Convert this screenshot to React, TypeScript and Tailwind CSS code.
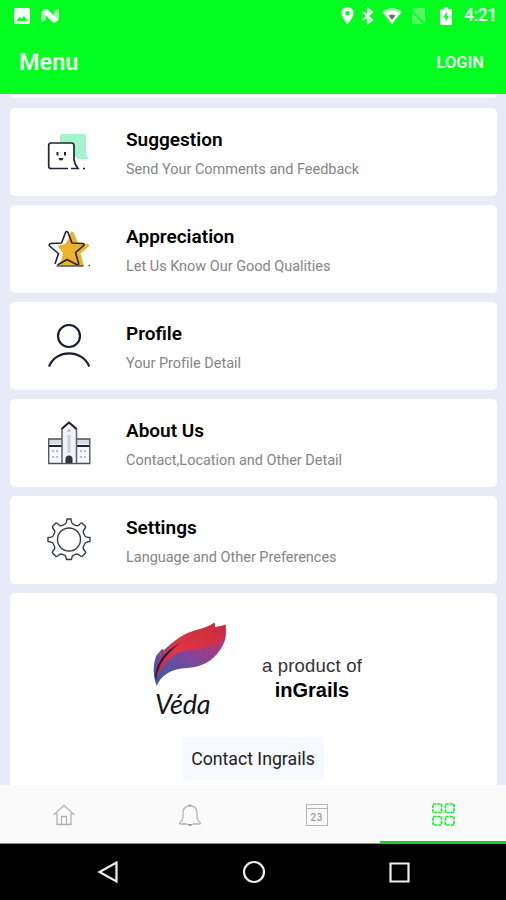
import React from 'react'

const SuggestionIcon = () => (
  <svg width="44" height="44" viewBox="0 0 44 44" fill="none">
    <path d="M15 4H37Q39 4 39 6V25L42 29H31L13 12V6Q13 4 15 4Z" fill="#a5f3cc" />
    <path d="M4 13H25Q27 13 27 15V31L31 38.500H4Q1.700 38.500 1.700 36V15Q1.700 13 4 13Z" fill="#fff" />
    <path d="M21 38.500H4Q1.700 38.500 1.700 36V15.500Q1.700 13 4 13H24.500Q27 13 27 15.500V30Q28 35 31 38.500H24M36 38.500H38" stroke="#20243a" strokeWidth="1.700" />
    <path d="M10.500 22V25.500M18 22V25.500" stroke="#20243a" strokeWidth="2" />
    <path d="M11.500 28H16.500Q16 30.500 14 30.500T11.500 28Z" fill="#20243a" />
  </svg>
)

const AppreciationIcon = () => (
  <svg width="44" height="44" viewBox="0 0 44 44" fill="none">
    <path d="M24 5Q26 4 27 6L31 16.500L41 17Q43 17.500 41.500 19.500L33.500 26.500L37 39H14L12 33L15 26.500L9 19L18 16Z" fill="#edb22b" />
    <path d="M10.500 38L12 27L3 18L14.500 16L19.500 5L22 11L18 17L10.500 19L16 26L14 34Z" fill="#fff" />
    <path d="M8 37L11.500 26.500L2.500 19Q1.500 17 4 16.500L14.500 16L18.500 5.500Q19.700 3.500 21 5.500L25 16L36 16.500Q38 17 36.500 18.700L28.500 25.500L31.500 36Q32 38.500 29.500 37.500L20 32.500L10.500 38" stroke="#20243a" strokeWidth="1.600" strokeLinejoin="round" />
    <path d="M9.500 39H36.500M41.500 38.500H43" stroke="#50536a" strokeWidth="1.300" />
  </svg>
)

const ProfileIcon = () => (
  <svg width="44" height="44" viewBox="0 0 44 44" fill="none" stroke="#1b1f35" strokeWidth="2.200">
    <circle cx="22" cy="12" r="11" />
    <path d="M2 42.500C9 25 35 25 42.300 42.500" />
  </svg>
)

const AboutIcon = () => (
  <svg width="44" height="44" viewBox="0 0 44 44" fill="none">
    <path d="M2 18H43V42H2Z" fill="#f7f8fb" />
    <path d="M2 18H43V23H2Z" fill="#d5dcea" />
    <path d="M1.500 25H15M29 25H43" stroke="#20243a" strokeWidth="2" />
    <path d="M15 18H1.700V42.500H42.800V18H29" stroke="#4b505d" strokeWidth="1.300" />
    <path d="M15 42V7.500L22 1.500L29.500 7.500V42" fill="#f0f2f6" stroke="#5d626e" strokeWidth="1.500" />
    <path d="M14.500 8L22 1.500L29.500 8" stroke="#1f222d" strokeWidth="1.900" />
    <path d="M22 14V32" stroke="#ccd0d8" strokeWidth="3" />
    <circle cx="22" cy="9.500" r="1.500" fill="#b9bfc9" />
    <path d="M5 30H12M5 36H12M33 30H40M33 36H40" stroke="#b7bec9" strokeWidth="2" strokeDasharray="2 2" />
    <path d="M18.500 42V38Q18.500 34.500 22 34.500T25.500 38V42Z" fill="#30343d" />
  </svg>
)

const SettingsIcon = () => (
  <svg width="44" height="44" viewBox="0 0 44 44" fill="none" stroke="#343848" strokeWidth="1.400" strokeLinejoin="round">
    <circle cx="22" cy="21.500" r="11.500" />
    <path d="M20 1H24Q24.500 5.500 26 6Q30 8.500 31.500 7.500Q34 4.500 35 5L38.500 8.500Q39 9.500 36.500 12.500Q35.500 14 38 18Q38.500 19.300 43 19.500V23.500Q38.500 24 38 25.500Q35.500 29.500 36.500 31Q39 34 38.500 35L35 38.500Q34 39 31 36.300Q29.500 35.300 26 37.500Q25 38 24.500 41.500H19.500Q19 38 18 37.500Q14.500 35.300 13 36.300Q10 39 9 38.500L5.500 35Q5 34 7.500 31Q8.500 29.500 6 25.500Q5.500 24 1 23.500V19.500Q5.500 19.300 6 18Q8.500 14 7.500 12.500Q5 9.500 5.500 8.500L9 5Q10 4.500 12.500 7.500Q14 8.500 18 6Q19.500 5.500 20 1Z" />
  </svg>
)

const menuItems = [
  { title: 'Suggestion', desc: 'Send Your Comments and Feedback', icon: <SuggestionIcon /> },
  { title: 'Appreciation', desc: 'Let Us Know Our Good Qualities', icon: <AppreciationIcon /> },
  { title: 'Profile', desc: 'Your Profile Detail', icon: <ProfileIcon /> },
  { title: 'About Us', desc: 'Contact,Location and Other Detail', icon: <AboutIcon /> },
  { title: 'Settings', desc: 'Language and Other Preferences', icon: <SettingsIcon /> },
];

const StatusBar = () => (
  <div className="flex h-[31px] items-center justify-between pl-[14px] pr-[9px]">
    <div className="flex items-center gap-[11px]">
      <svg width="16" height="16" viewBox="0 0 16 16">
        <path fillRule="evenodd" d="M2 0H14Q16 0 16 2V14Q16 16 14 16H2Q0 16 0 14V2Q0 0 2 0ZM2.500 13H13.500L10 8L7.500 11L5.500 9Z" fill="#f4fff4" />
      </svg>
      <svg width="19" height="16" viewBox="0 0 19 16">
        <path d="M0 4L5 1V12L0 14ZM13 3L18 0V11L13 14Z" fill="#9bfaa4" />
        <path d="M2 1H6L17 11V13L14 14.500H12L2 5Z" fill="#f4fff4" />
      </svg>
    </div>
    <div className="flex items-center">
      <svg width="13" height="18" viewBox="0 0 13 18">
        <path fillRule="evenodd" d="M6.500 0A6.200 6.200 0 0 1 12.700 6.200C12.700 10 6.500 17.500 6.500 17.500S.3 10 .3 6.200A6.200 6.200 0 0 1 6.500 0ZM6.500 4A2.300 2.300 0 1 0 6.500 8.600A2.300 2.300 0 1 0 6.500 4Z" fill="#f4fff4" />
      </svg>
      <svg className="ml-2" width="12" height="18" viewBox="0 0 12 18" fill="none" stroke="#eaffeb" strokeWidth="2.200">
        <path d="M1 5L10 13L6 16V2L10 5L1 13" />
      </svg>
      <svg className="ml-2" width="20" height="16" viewBox="0 0 20 16">
        <path d="M0 4Q10 -4 20 4L10 16Z" fill="#a4fcac" />
        <path d="M2 5Q10 1 18 5L10 16Z" fill="#fff" />
        <path d="M6.500 7.500Q10 5.500 13.500 7.500L10 12Z" fill="#667568" />
      </svg>
      <svg className="ml-[9px]" width="15" height="16" viewBox="0 0 15 16">
        <path d="M4 0H14V15L1 2ZM1 4L12 16H1Z" fill="#55f563" />
      </svg>
      <svg className="ml-[14px]" width="12" height="18" viewBox="0 0 12 18">
        <path fillRule="evenodd" d="M4 0H8V2H11Q12 2 12 3V17Q12 18 11 18H1Q0 18 0 17V3Q0 2 1 2H4ZM7 5L3 10.500H5.500V14.500L9 9H6.800Z" fill="#f4fff4" />
      </svg>
      <span className="ml-[12px] w-[33px] whitespace-nowrap pt-px text-[17.500px] font-semibold leading-none tracking-[-0.500px] text-[#eaffeb]">4:21</span>
    </div>
  </div>
)

const Header = () => (
  <header className="h-[94px] shrink-0 bg-[#00ff1e]">
    <StatusBar />
    <div className="flex h-[63px] items-center justify-between pl-[19px] pr-[22px] text-[#efffef]">
      <h1 className="pt-px text-[23.500px] font-semibold">Menu</h1>
      <button className="pt-px text-[16.500px] font-semibold">LOGIN</button>
    </div>
  </header>
)

const VedaLogo = () => (
  <div className="w-[80px]">
    <svg width="80" height="70" viewBox="150 618 80 70">
      <defs>
        <linearGradient id="lower" x1="0" y1="1" x2="1" y2="0">
          <stop offset="0" stopColor="#315da5" />
          <stop offset="0.500" stopColor="#80479a" />
          <stop offset="1" stopColor="#d52956" />
        </linearGradient>
        <linearGradient id="upper" x1="0" y1="1" x2="1" y2="0">
          <stop offset="0" stopColor="#ab2d65" />
          <stop offset="0.400" stopColor="#e03649" />
          <stop offset="1" stopColor="#c72b3c" />
        </linearGradient>
      </defs>
      <path d="M225 625Q229 640 217 654Q206 667 187 668Q164 669 156.500 686Q151 670 156 656L162 649L164 650Q180 634 201 630Z" fill="url(#lower)" />
      <path d="M156 681Q154 662 168 648Q178 635 196 630Q208 627 214.500 622.500Q216 626 213.500 630Q221 628 225.500 624Q227 632 221 640Q211 648 193 650Q177 650 168 661Q159 671 156 681Z" fill="url(#upper)" />
      <path d="M156 681Q157 664 171 651Q180 641 194 637Q176 643 165 654Q156 664 155 677Z" fill="#291c3b" />
      <path d="M160 652L160.500 656M164 650L164 654" stroke="#de4565" strokeWidth="1" />
    </svg>
    <div className="-mt-px pl-[5px] font-['Lato',cursive] text-[27px] italic leading-[34px] tracking-[-0.200px] text-[#15151a]">Véda</div>
  </div>
)

const BottomTabs = () => (
  <nav className="grid h-[59px] shrink-0 grid-cols-4 border-b border-[#8d8d8d] bg-[#fafafa]">
    <div className="flex items-center justify-center pl-px pt-px">
      <svg width="22" height="22" viewBox="0 0 22 22" fill="none" stroke="#b3b3b3" strokeWidth="1.300">
        <path d="M.5 11L11 1.500L21.500 11M4 9V20.500H18V9M8.500 20V12.500H13.500V20" />
      </svg>
    </div>
    <div className="flex items-center justify-center pt-px">
      <svg width="22" height="22" viewBox="0 0 22 22" fill="none" stroke="#b3b3b3" strokeWidth="1.300">
        <path d="M8 20H2Q0 20 1 18.500Q4 16 4 13V8Q4.500 2 11 2T18 8V13Q18 16 21 18.500Q22 20 20 20H14M9.500 1H12.500" />
        <path d="M8 20H14Q13 22 11 22T8 20Z" fill="#999" stroke="none" />
      </svg>
    </div>
    <div className="flex items-center justify-center pl-px pt-px">
      <div className="h-[22px] w-[22px] border border-[#b5b5b5]">
        <div className="h-[4px] border-b border-[#b5b5b5]" />
        <div className="text-center text-[10px] font-medium leading-[17px] tracking-[0.500px] text-[#999]">23</div>
      </div>
    </div>
    <div className="-mb-px flex items-center justify-center border-b-[3px] border-[#08dd1d]">
      <svg className="ml-px mt-[3px]" width="23" height="23" viewBox="0 0 23 23" fill="#f3fff4" stroke="#1ee532" strokeWidth="1.600">
        <rect x="1" y="1" width="8.500" height="8.500" strokeDasharray="3.250 1" />
        <rect x="13.500" y="1" width="8.500" height="8.500" strokeDasharray="3.250 1" />
        <rect x="1" y="13.500" width="8.500" height="8.500" strokeDasharray="3.250 1" />
        <rect x="13.500" y="13.500" width="8.500" height="8.500" strokeDasharray="3.250 1" />
      </svg>
    </div>
  </nav>
)

const SystemNav = () => (
  <div className="flex h-[56px] shrink-0 items-center justify-center gap-[122px] bg-black pl-px">
    <svg width="24" height="24" viewBox="0 0 24 24" fill="none" stroke="#eee" strokeWidth="2.200">
      <path d="M20.500 2.500V21.500L3.500 12Z" />
    </svg>
    <svg width="24" height="24" viewBox="0 0 24 24" fill="none" stroke="#eee" strokeWidth="2.200">
      <circle cx="12" cy="12" r="10" />
    </svg>
    <svg width="24" height="24" viewBox="0 0 24 24" fill="none" stroke="#eee" strokeWidth="2.200">
      <path d="M2.500 3.500H20.500V21.500H2.500Z" />
    </svg>
  </div>
)

const App = () => {
  return (
    <div className="flex h-[900px] w-[506px] flex-col overflow-hidden bg-[#e8ebf7] font-['Roboto',sans-serif]">
      <Header />
      <main className="flex h-[691px] shrink-0 flex-col overflow-hidden pl-[10px] pr-[9px]">
        {/* bottom edge of the card scrolled under the header */}
        <div className="mb-[10px] h-[4px] shrink-0 rounded-b-[5px] bg-[#fcfcff]" />
        {menuItems.map((item) => (
          <div key={item.title} className="mb-[9px] flex h-[88px] shrink-0 rounded-[5px] bg-white pl-[37px] pt-[22px]">
            {item.icon}
            <div className="ml-[35px]">
              <h2 className="-mt-[2px] text-[19px] font-semibold leading-[24px] text-black">{item.title}</h2>
              <p className="mt-[8px] text-[14.500px] leading-[20px] tracking-[-0.020px] text-[#858585]">{item.desc}</p>
            </div>
          </div>
        ))}
        <div className="h-[192px] shrink-0 rounded-t-[5px] bg-white pt-[25px]">
          <div className="flex pl-[140px]">
            <VedaLogo />
            <div className="ml-[27px] mt-[36px] w-[110px] text-center font-['Liberation_Sans',sans-serif] text-black">
              <div className="whitespace-nowrap text-[18.500px] leading-[24px] tracking-[0.200px] text-[#333]">a product of</div>
              <div className="text-[20px] font-bold leading-[24px]">inGrails</div>
            </div>
          </div>
          <button className="ml-[172px] mt-[16px] block h-[43px] w-[142px] bg-[#f6f9fe] pt-px text-[17.700px] text-[#222]">Contact Ingrails</button>
        </div>
      </main>
      <BottomTabs />
      <SystemNav />
    </div>
  )
}

export default App
